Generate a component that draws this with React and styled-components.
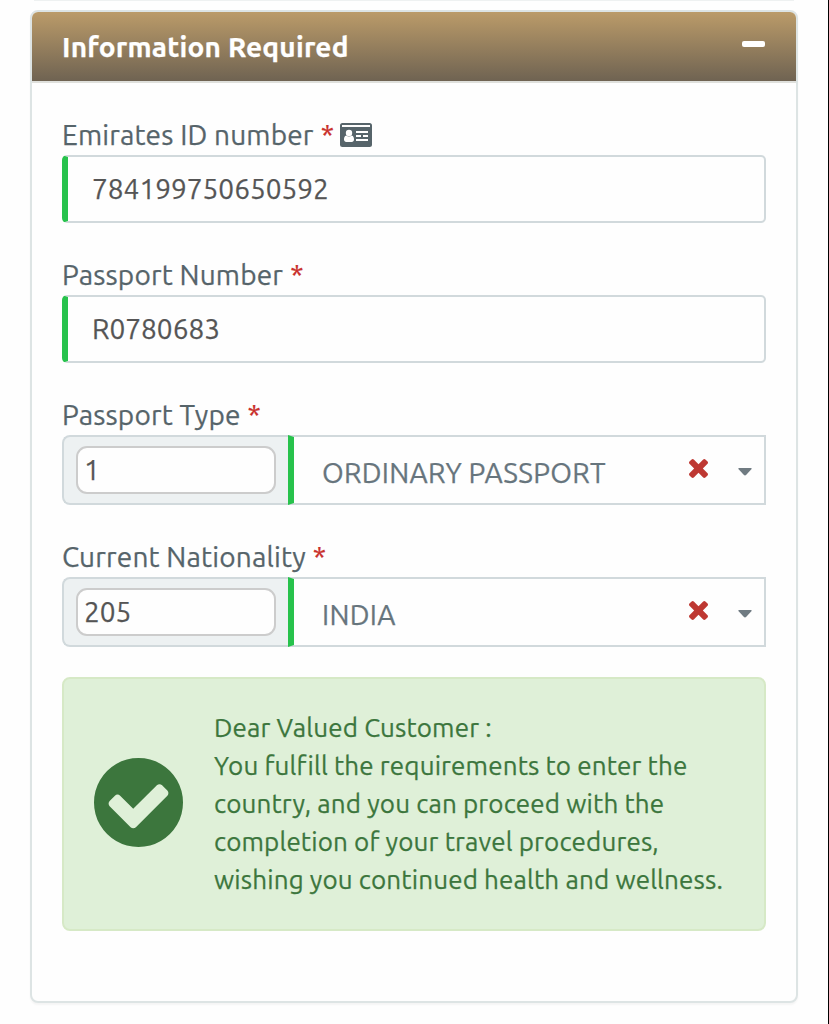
import React from 'react';
import styled, { createGlobalStyle } from 'styled-components';

const GlobalStyle = createGlobalStyle`
  *, *::before, *::after { box-sizing: border-box; }
  html, body { margin: 0; padding: 0; background: #fefefe; }
  body {
    font-family: Ubuntu, "Noto Sans", "Open Sans", sans-serif;
    color: #56646a;
    -webkit-text-stroke: 0.25px currentColor;
  }
`;

const Page = styled.div`
  height: 1024px;
  padding: 0 30px;
  border-right: 1px solid #000;
  overflow: hidden;
`;

const PreviousCardEdge = styled.div`
  height: 1px;
  margin: 0 4px 9px;
  background: #eef1f1;
`;

const Card = styled.section`
  height: 993px;
  border: 2px solid #dde4e4;
  border-radius: 8px;
  background: #fefefe;
  box-shadow: 0 2px 2px rgba(0, 0, 0, 0.04);
  overflow: hidden;
`;

const CardHeader = styled.header`
  display: flex;
  justify-content: space-between;
  height: 71px;
  padding: 0 31px 0 30px;
  border-bottom: 2px solid #dfe0dc;
  background: linear-gradient(#bb9b69, #6f6352);
`;

const Title = styled.h2`
  margin: 0;
  color: #fff;
  font-size: 28px;
  font-weight: 700;
  line-height: 70px;
  letter-spacing: 0.2px;
  white-space: nowrap;
`;

const Collapse = styled.button`
  width: 23px;
  height: 6px;
  margin-top: 29px;
  padding: 0;
  border: 0;
  border-radius: 2px;
  background: #fff;
`;

const CardBody = styled.div`
  padding: 34px 30px 0;
`;

const Field = styled.div`
  height: ${(p) => p.$height}px;
`;

const Label = styled.label`
  display: flex;
  align-items: center;
  height: 38px;
  padding-bottom: 2px;
  font-size: 28px;
  line-height: 36px;
  letter-spacing: 0.17px;
  white-space: pre;
`;

const Required = styled.span`
  margin-left: 7px;
  color: #c9302c;
`;

const InputBox = styled.div`
  height: 68px;
  padding-left: 24px;
  border: 2px solid #d1d9dc;
  border-left: 6px solid #27c24c;
  border-radius: 5px;
  background: #fefefe;
  color: #555;
  font-size: 28px;
  line-height: 63px;
`;

const Group = styled.div`
  display: flex;
  height: 70px;
`;

const Addon = styled.div`
  width: 226px;
  padding: 9px 12px;
  border: 2px solid #d1d9dc;
  border-right: 0;
  border-radius: 8px 0 0 8px;
  background: #edf1f2;
`;

const CodeBox = styled.div`
  width: 200px;
  height: 48px;
  padding-left: 6px;
  border: 2px solid #ccc;
  border-radius: 11px;
  background: #fefefe;
  color: #555;
  font-size: 28px;
  line-height: 43px;
`;

const Select = styled.div`
  display: flex;
  flex: 1;
  padding: 0 12px 0 28px;
  border: 2px solid #d1d9dc;
  border-left: 6px solid #27c24c;
  background: #fefefe;
`;

const SelectValue = styled.span`
  flex: 1;
  color: #67757d;
  font-size: 28px;
  line-height: 72px;
  letter-spacing: 0.27px;
  white-space: nowrap;
`;

const ClearIcon = styled.svg`
  width: 19px;
  height: 19px;
  margin: 22px 30px 0 0;
  fill: #be3832;
`;

const Caret = styled.svg`
  width: 14px;
  height: 8px;
  margin-top: 31px;
  fill: #707b82;
`;

const IdIcon = styled.svg`
  width: 32px;
  height: 24px;
  margin-left: 6px;
`;

const Alert = styled.div`
  display: flex;
  height: 254px;
  padding: 30px;
  border: 2px solid #d6e9c6;
  border-radius: 8px;
  background: #dff0d8;
`;

const CheckIcon = styled.svg`
  flex: none;
  width: 89px;
  height: 89px;
  margin: 49px 31px 0 0;
  fill: #3c763d;
`;

const Message = styled.div`
  color: #3c763d;
  font-size: 26px;
  line-height: 38px;
  letter-spacing: 0.14px;
`;

const Line = styled.div`
  white-space: nowrap;
`;

const MESSAGE = [
  'Dear Valued Customer :',
  'You fulfill the requirements to enter the',
  'country, and you can proceed with the',
  'completion of your travel procedures,',
  'wishing you continued health and wellness.',
];

function IdCard() {
  return (
    <IdIcon viewBox="0 0 32 24">
      <rect width="32" height="24" rx="2.5" fill="#56646a" />
      <g fill="#fefefe">
        <path d="M2 2h28v2H2z" />
        <circle cx="9" cy="10" r="3.2" />
        <path d="M6.2 12.5c-1.6.6-2.2 2-2.2 4C4 18 5 19 6.200 19h5.600C13 19 14 18 14 16.500c0-2-.6-3.400-2.200-4-1.600 1.200-4 1.200-5.600 0z" />
        <path d="M16 8h12v2H16zM16 12h5v2h-5zM23 12h5v2h-5zM16 16h12v2H16z" />
      </g>
    </IdIcon>
  );
}

function SelectField({ label, code, value, height }) {
  return (
    <Field $height={height}>
      <Label>{label}<Required>*</Required></Label>
      <Group>
        <Addon><CodeBox>{code}</CodeBox></Addon>
        <Select>
          <SelectValue>{value}</SelectValue>
          <ClearIcon viewBox="302 366 1188 1188">
            <path d="M1490 1322q0 40-28 68l-136 136q-28 28-68 28t-68-28l-294-294-294 294q-28 28-68 28t-68-28l-136-136q-28-28-28-68t28-68l294-294-294-294q-28-28-28-68t28-68l136-136q28-28 68-28t68 28l294 294 294-294q28-28 68-28t68 28l136 136q28 28 28 68t-28 68l-294 294 294 294q28 28 28 68z" />
          </ClearIcon>
          <Caret viewBox="0 0 14 8"><path d="M1 0h12q1 0 .6 1L8.300 6.800Q7 8 5.700 6.800L.4 1Q0 0 1 0z" /></Caret>
        </Select>
      </Group>
    </Field>
  );
}

export default function App() {
  return (
    <Page>
      <GlobalStyle />
      <PreviousCardEdge />
      <Card>
        <CardHeader>
          <Title>Information Required</Title>
          <Collapse aria-label="Collapse" />
        </CardHeader>
        <CardBody>
          <Field $height={140}>
            <Label>Emirates ID number<Required>*</Required><IdCard /></Label>
            <InputBox>784199750650592</InputBox>
          </Field>
          <Field $height={140}>
            <Label>Passport Number<Required>*</Required></Label>
            <InputBox>R0780683</InputBox>
          </Field>
          <SelectField height={142} label="Passport Type" code="1" value="ORDINARY PASSPORT" />
          <SelectField height={138} label="Current Nationality" code="205" value="INDIA" />
          <Alert>
            <CheckIcon viewBox="0 128 1536 1536">
              <path d="M1284 734q0-28-18-46l-91-90q-19-19-45-19t-45 19l-408 407-226-226q-19-19-45-19t-45 19l-91 90q-18 18-18 46 0 27 18 45l362 362q19 19 45 19 27 0 46-19l543-543q18-18 18-45zm252 162q0 209-103 385.500t-279.500 279.500-385.500 103-385.500-103-279.500-279.500-103-385.500 103-385.500 279.500-279.500 385.500-103 385.500 103 279.500 279.500 103 385.500z" />
            </CheckIcon>
            <Message>
              {MESSAGE.map((text) => <Line key={text}>{text}</Line>)}
            </Message>
          </Alert>
        </CardBody>
      </Card>
    </Page>
  );
}
